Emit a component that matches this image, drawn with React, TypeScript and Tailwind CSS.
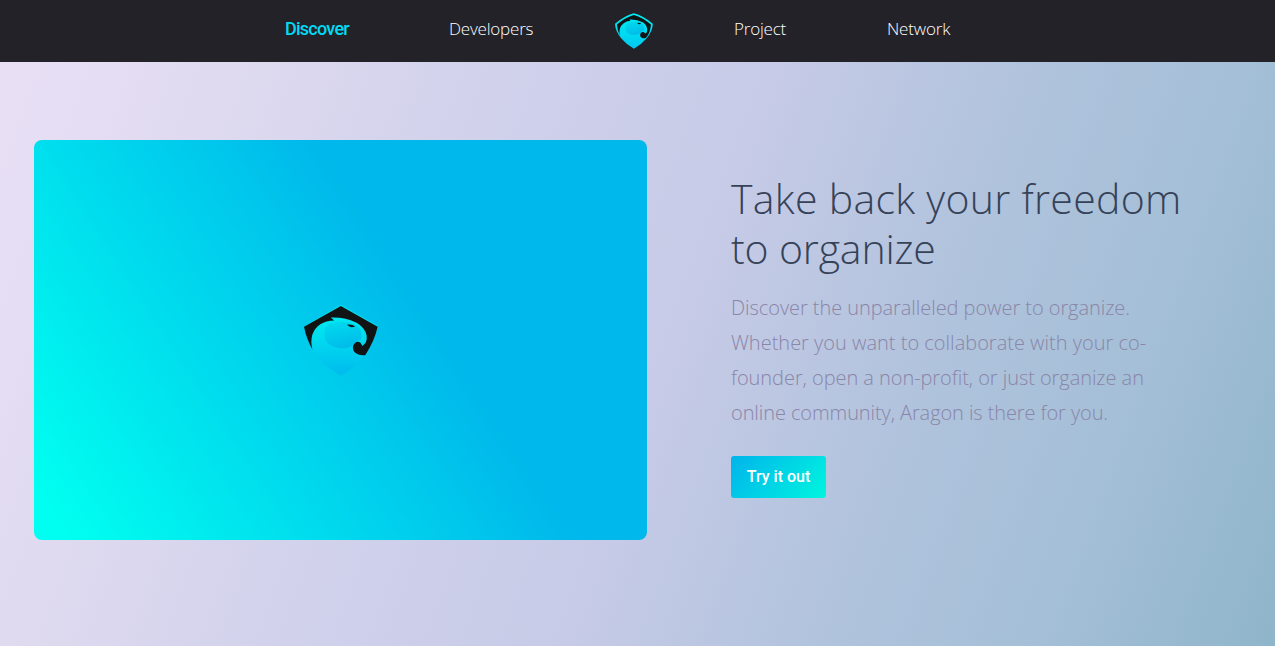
type LogoProps = { id: string; className: string; nav?: boolean };

function Eagle({ id, className, nav = false }: LogoProps) {
  return (
    <svg viewBox="42 31 221 211" className={className} preserveAspectRatio="none" aria-hidden="true">
      <defs>
        <linearGradient id={`${id}-body`} x1="0" y1="0" x2="0" y2="1">
          <stop offset="0" stopColor="#00eef2" />
          <stop offset="0.4" stopColor="#00e0f0" />
          <stop offset="1" stopColor={nav ? "#00c8f0" : "#00baed"} />
        </linearGradient>
        <linearGradient id={`${id}-wing`} x1="0" y1="0" x2="0.3" y2="1">
          <stop offset="0" stopColor="#00dcee" />
          <stop offset="1" stopColor="#00bdea" />
        </linearGradient>
      </defs>
      <path
        d={
          nav
            ? "M152 33 Q207 48 262 94 Q260 139 225 181 Q196 216 152 241 Q108 216 79 181 Q44 139 42 94 Q97 48 152 33Z"
            : "M152 31 L262 93 Q252 144 225 181 Q196 216 152 241 Q108 216 79 181 Q52 144 42 94Z"
        }
        fill={`url(#${id}-body)`}
      />
      <path
        d={
          nav
            ? "M152 42 Q202 56 251 98 Q248 143 225 173 L220 178 Q199 182 190 170 Q184 153 197 144 Q210 137 218 151 Q231 148 229 123 Q225 97 203 85 Q166 66 126 69 L132 77 Q84 82 70 124 Q65 144 70 164 Q56 132 53 98 Q102 56 152 42Z"
            : "M152 34 L262 96 Q252 140 225 180 Q199 182 190 167 Q184 151 196 142 Q210 136 216 153 Q232 143 229 122 Q224 98 199 84 Q165 66 122 68 L132 77 Q82 78 67 119 Q61 140 67 163 Q49 132 42 96Z"
        }
        fill="#111315"
      />
      <path
        d="M109 92 Q128 80 170 82 Q195 85 209 101 Q215 114 212 134 Q196 136 190 150 Q176 160 154 160 Q120 158 106 136 Q99 112 109 92Z"
        fill={`url(#${id}-wing)`}
      />
      <path d="M170 90 Q182 86 195 94 Q184 99 178 95Z" fill="#111315" />
    </svg>
  );
}

export default function App() {
  return (
    <div className="flex h-[646px] w-[1275px] flex-col overflow-hidden font-['Open_Sans',sans-serif]">
      <header className="h-[62px] bg-[#232228]">
        <nav className="flex h-[60px] items-center pl-[285px] text-[17px] font-light whitespace-nowrap text-white">
          <a className="w-[164px] pb-[3px] font-['Roboto',sans-serif] text-[18px] font-medium tracking-[-0.75px] text-[#00dcf5]">Discover</a>
          <a className="w-[166px] pb-[2px] tracking-[-0.2px]">Developers</a>
          <Eagle id="nav" nav className="mt-px h-[36px] w-[38px] shrink-0" />
          <a className="ml-[81px] w-[153px] pb-[2px] tracking-[-0.2px]">Project</a>
          <a className="pb-[2px] tracking-[-0.15px]">Network</a>
        </nav>
      </header>
      <main className="flex flex-1 items-start bg-[linear-gradient(110deg,#e8dff5_2%,#ddd9ef_18%,#d2d2ec_32%,#c7cbe7_52%,#b1c3dd_69%,#a4bfd7_84%,#8fb5cb_100%)] pt-[78px] pl-[34px]">
        <div className="flex h-[400px] w-[613px] items-center justify-center rounded-lg bg-[linear-gradient(57deg,#00fff0_4%,#00b8eb_62%)]">
          <Eagle id="hero" className="h-[71px] w-[74px]" />
        </div>
        <section className="ml-[84px] pt-[33px] whitespace-nowrap">
          <h1 className="text-[41px] leading-[50px] font-light text-[#364257]">
            <span className="block tracking-[0.3px]">Take back your freedom</span>
            <span className="block tracking-[-0.15px]">to organize</span>
          </h1>
          <p className="mt-[17px] text-[20px] leading-[35px] font-light text-[#8a86a8]">
            <span className="block tracking-[-0.06px]">Discover the unparalleled power to organize.</span>
            <span className="block">Whether you want to collaborate with your co-</span>
            <span className="block tracking-[-0.06px]">founder, open a non-profit, or just organize an</span>
            <span className="block tracking-[-0.09px]">online community, Aragon is there for you.</span>
          </p>
          <button className="mt-[26px] h-[42px] w-[95px] rounded-[3px] bg-[linear-gradient(130deg,#00b4eb,#00f5df)] font-['Roboto',sans-serif] text-[16px] font-medium text-white">
            Try it out
          </button>
        </section>
      </main>
    </div>
  );
}
